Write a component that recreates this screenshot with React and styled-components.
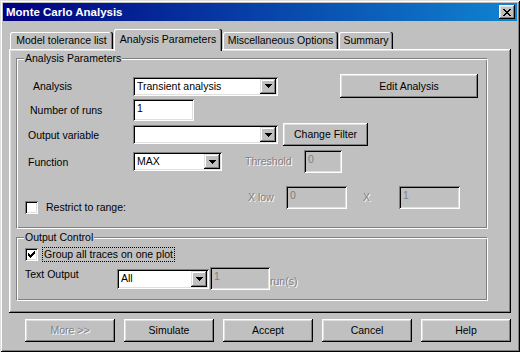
import React from 'react';
import styled, { createGlobalStyle } from 'styled-components';

const Global = createGlobalStyle`
  html, body { margin: 0; padding: 0; background: #c0c0c0; }
  body {
    font-family: "Liberation Sans", Arial, sans-serif;
    font-size: 10.5px;
    line-height: 13px;
    color: #000;
  }
  * { box-sizing: border-box; }
`;

const raised = `box-shadow: inset -1px -1px #000, inset 1px 1px #fff, inset -2px -2px #808080, inset 2px 2px #dfdfdf;`;
const sunken = `box-shadow: inset 1px 1px #808080, inset -1px -1px #fff, inset 2px 2px #000, inset -2px -2px #dfdfdf;`;

const Window = styled.div`
  width: 520px;
  height: 352px;
  padding: 3px;
  background: #c0c0c0;
  display: flex;
  flex-direction: column;
  box-shadow: inset 1px 1px #dfdfdf, inset -1px -1px #000, inset 2px 2px #fff, inset -2px -2px #808080;
`;

const TitleBar = styled.div`
  height: 18px;
  display: flex;
  align-items: center;
  padding: 0 2px 0 3px;
  background: linear-gradient(to right, #000080, #1084d0);
`;

const TitleText = styled.span`
  color: #fff;
  font-weight: bold;
  font-size: 11.5px;
  white-space: nowrap;
`;

const CloseButton = styled.div`
  margin-left: auto;
  width: 16px;
  height: 14px;
  background: #c0c0c0;
  display: flex;
  align-items: center;
  justify-content: center;
  padding-right: 1px;
  ${raised}
`;

const TabStrip = styled.div`
  margin-top: 8px;
  height: 20px;
  display: flex;
  align-items: flex-end;
  gap: 1px;
  padding-left: 7px;
`;

const Tab = styled.div`
  position: relative;
  z-index: ${p => (p.$active ? 2 : 0)};
  width: ${p => p.$w}px;
  height: ${p => (p.$active ? 22 : 17)}px;
  margin-bottom: ${p => (p.$active ? -2 : 0)}px;
  padding-bottom: ${p => (p.$active ? 2 : 0)}px;
  background: #c0c0c0;
  display: flex;
  align-items: center;
  justify-content: center;
  white-space: nowrap;
  border-top-left-radius: 2px;
  border-top-right-radius: 2px;
  box-shadow: inset -1px 0 #000, inset -2px 0 #808080, inset 1px 1px #fff;
`;

const Panel = styled.div`
  margin-left: 6px;
  width: 502px;
  height: 264px;
  padding: 9px 0 0 7px;
  background: #c0c0c0;
  ${raised}
  box-shadow: inset -1px -1px #000, inset 1px 1px #fff, inset -2px -2px #808080, inset 2px 2px #dfdfdf;
`;

const GroupBox = styled.div`
  position: relative;
  width: 472px;
  height: ${p => p.$h}px;
  margin-top: ${p => p.$mt || 0}px;
  padding-top: ${p => p.$pt}px;
  border: 1px solid #808080;
  border-right-color: #fff;
  border-bottom-color: #fff;
  box-shadow: inset 1px 1px #fff, inset -1px -1px #808080;
`;

const Legend = styled.span`
  position: absolute;
  top: -7px;
  left: 7px;
  padding: 0 1px;
  background: #c0c0c0;
  white-space: nowrap;
`;

const Row = styled.div`
  display: flex;
  align-items: ${p => p.$align || 'center'};
  height: ${p => p.$h}px;
  margin-top: ${p => p.$mt || 0}px;
`;

const Label = styled.span`
  flex-shrink: 0;
  width: ${p => p.$w}px;
  padding-left: ${p => p.$indent || 0}px;
  padding-top: ${p => p.$pt || 0}px;
  align-self: ${p => p.$self || 'auto'};
  white-space: nowrap;
`;

const DisabledLabel = styled.span`
  flex-shrink: 0;
  width: ${p => (p.$w ? `${p.$w}px` : 'auto')};
  margin-left: ${p => p.$ml || 0}px;
  line-height: ${p => p.$lh || 13}px;
  padding-bottom: ${p => p.$pb || 0}px;
  align-self: ${p => p.$self || 'auto'};
  color: #808080;
  text-shadow: 1px 1px 0 #fff;
  white-space: nowrap;
`;

const Combo = styled.div`
  flex-shrink: 0;
  width: ${p => p.$w}px;
  height: ${p => p.$h}px;
  padding: 2px;
  background: #fff;
  display: flex;
  align-items: center;
  ${sunken}
`;

const ComboText = styled.span`
  flex: 1;
  padding-left: 2px;
  white-space: nowrap;
  overflow: hidden;
`;

const DropButton = styled.div`
  width: 16px;
  height: 100%;
  background: #c0c0c0;
  display: flex;
  align-items: center;
  justify-content: center;
  box-shadow: inset -1px -1px #000, inset 1px 1px #dfdfdf, inset -2px -2px #808080, inset 2px 2px #fff;
`;

const Edit = styled.div`
  flex-shrink: 0;
  width: ${p => p.$w}px;
  height: ${p => p.$h}px;
  margin-left: ${p => p.$ml || 0}px;
  padding: 3px 0 0 4px;
  background: ${p => (p.$disabled ? '#c0c0c0' : '#fff')};
  color: ${p => (p.$disabled ? '#808080' : '#000')};
  white-space: nowrap;
  ${sunken}
`;

const Button = styled.div`
  flex-shrink: 0;
  width: ${p => p.$w}px;
  height: ${p => p.$h}px;
  margin-left: ${p => p.$ml || 0}px;
  background: #c0c0c0;
  display: flex;
  align-items: center;
  justify-content: center;
  white-space: nowrap;
  color: ${p => (p.$disabled ? '#808080' : '#000')};
  text-shadow: ${p => (p.$disabled ? '1px 1px 0 #fff' : 'none')};
  ${raised}
`;

const CheckArea = styled.div`
  flex-shrink: 0;
  width: ${p => (p.$w ? `${p.$w}px` : 'auto')};
  align-self: ${p => p.$self || 'auto'};
  display: flex;
  align-items: center;
  padding-left: 8px;
`;

const CheckBox = styled.div`
  flex-shrink: 0;
  width: 13px;
  height: 13px;
  background: #fff;
  display: flex;
  align-items: center;
  justify-content: center;
  ${sunken}
`;

const CheckLabel = styled.span`
  margin-left: ${p => p.$ml}px;
  padding: 0 1px;
  border: ${p => (p.$focus ? '1px dotted #000' : '1px solid transparent')};
  white-space: nowrap;
`;

const ButtonBar = styled.div`
  margin-top: 6px;
  display: flex;
  gap: 9px;
  padding-left: 22px;
`;

const Pix = ({ rows }) => (
  <svg width={rows[0].length} height={rows.length} shapeRendering="crispEdges" style={{ display: 'block' }}>
    {rows.flatMap((r, y) =>
      r.split('').map((c, x) => (c === 'x' ? <rect key={`${x}-${y}`} x={x} y={y} width="1" height="1" fill="#000" /> : null))
    )}
  </svg>
);

const CLOSE = ['xx....xx', '.xx..xx.', '..xxxx..', '...xx...', '..xxxx..', '.xx..xx.', 'xx....xx'];
const ARROW = ['xxxxxxx', '.xxxxx.', '..xxx..', '...x...'];
const CHECK = ['......x', '.....xx', 'x...xxx', 'xx.xxx.', 'xxxxx..', '.xxx...', '..x....'];

const Dropdown = ({ w, h, value }) => (
  <Combo $w={w} $h={h}>
    <ComboText>{value}</ComboText>
    <DropButton>
      <Pix rows={ARROW} />
    </DropButton>
  </Combo>
);

export default function App() {
  return (
    <>
      <Global />
      <Window>
        <TitleBar>
          <TitleText>Monte Carlo Analysis</TitleText>
          <CloseButton>
            <Pix rows={CLOSE} />
          </CloseButton>
        </TitleBar>

        <TabStrip>
          <Tab $w={103}>Model tolerance list</Tab>
          <Tab $w={108} $active>Analysis Parameters</Tab>
          <Tab $w={115}>Miscellaneous Options</Tab>
          <Tab $w={54}>Summary</Tab>
        </TabStrip>

        <Panel>
          <GroupBox $h={171} $pt={15}>
            <Legend>Analysis Parameters</Legend>
            <Row $h={24}>
              <Label $w={116} $indent={16}>Analysis</Label>
              <Dropdown w={145} h={19} value="Transient analysis" />
              <Button $w={138} $h={24} $ml={62}>Edit Analysis</Button>
            </Row>
            <Row $h={22} $mt={1}>
              <Label $w={116} $indent={13}>Number of runs</Label>
              <Edit $w={61} $h={22}>1</Edit>
            </Row>
            <Row $h={23} $mt={2}>
              <Label $w={116} $indent={11} $pt={2}>Output variable</Label>
              <Dropdown w={145} h={19} value="" />
              <Button $w={85} $h={23} $ml={5}>Change Filter</Button>
            </Row>
            <Row $h={23} $mt={4}>
              <Label $w={116} $indent={11} $pt={2}>Function</Label>
              <Dropdown w={89} h={19} value="MAX" />
              <DisabledLabel $ml={23} $w={59}>Threshold</DisabledLabel>
              <Edit $w={38} $h={23} $disabled>0</Edit>
            </Row>
            <Row $h={29} $mt={13} $align="flex-start">
              <CheckArea $w={231} $self="flex-end">
                <CheckBox />
                <CheckLabel $ml={6}>Restrict to range:</CheckLabel>
              </CheckArea>
              <DisabledLabel $w={38} $lh={23}>X low</DisabledLabel>
              <Edit $w={61} $h={23} $disabled>0</Edit>
              <DisabledLabel $ml={16} $w={36} $lh={23}>X</DisabledLabel>
              <Edit $w={61} $h={23} $disabled>1</Edit>
            </Row>
          </GroupBox>

          <GroupBox $h={64} $pt={9} $mt={8}>
            <Legend>Output Control</Legend>
            <Row $h={15}>
              <CheckArea>
                <CheckBox>
                  <Pix rows={CHECK} />
                </CheckBox>
                <CheckLabel $ml={4} $focus>Group all traces on one plot</CheckLabel>
              </CheckArea>
            </Row>
            <Row $h={23} $mt={5}>
              <Label $w={100} $indent={8} $pt={1} $self="flex-start">Text Output</Label>
              <Dropdown w={92} h={20} value="All" />
              <Edit $w={60} $h={23} $ml={1} $disabled>1</Edit>
              <DisabledLabel $self="flex-end" $pb={2}>run(s)</DisabledLabel>
            </Row>
          </GroupBox>
        </Panel>

        <ButtonBar>
          <Button $w={90} $h={23} $disabled>More &gt;&gt;</Button>
          <Button $w={90} $h={23}>Simulate</Button>
          <Button $w={90} $h={23}>Accept</Button>
          <Button $w={90} $h={23}>Cancel</Button>
          <Button $w={90} $h={23}>Help</Button>
        </ButtonBar>
      </Window>
    </>
  );
}
